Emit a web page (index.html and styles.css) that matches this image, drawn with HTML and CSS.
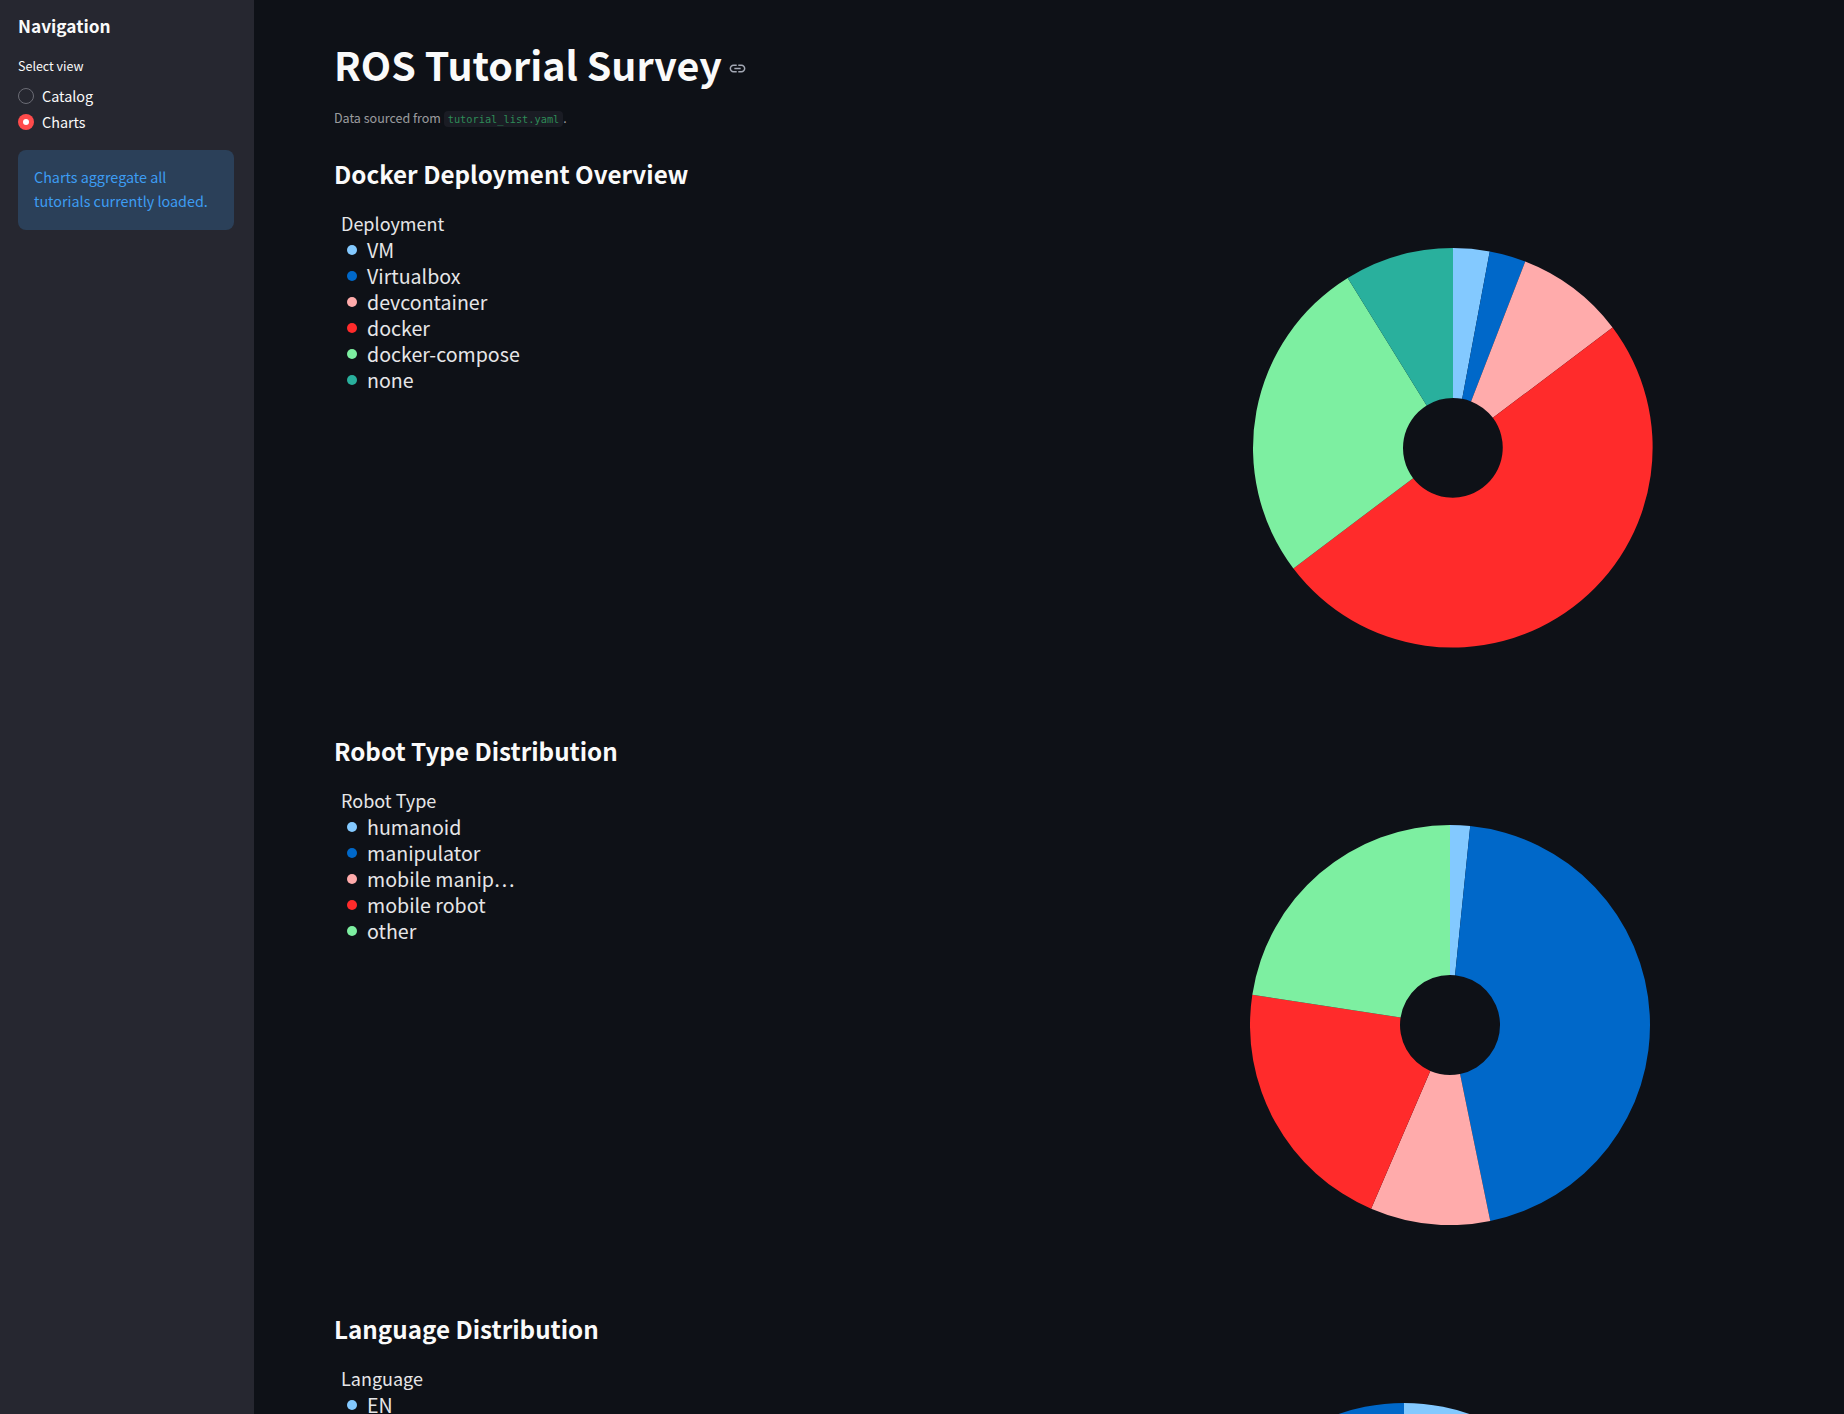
FILE: index.html
```html
<!DOCTYPE html>
<html lang="en">
<head>
<meta charset="utf-8">
<title>ROS Tutorial Survey</title>
<link rel="stylesheet" href="styles.css">
</head>
<body>
<div class="app">
  <aside class="sidebar">
    <h2 class="nav-title">Navigation</h2>
    <div class="radio-label">Select view</div>
    <div class="radio-group">
      <div class="radio"><span class="dot"></span><span>Catalog</span></div>
      <div class="radio"><span class="dot dot-on"></span><span>Charts</span></div>
    </div>
    <div class="info">Charts aggregate all tutorials currently loaded.</div>
  </aside>
  <main class="main">
    <h1 class="title">ROS Tutorial Survey
      <svg class="anchor" viewBox="0 0 24 24" width="19" height="19" aria-hidden="true"><path d="M3.9 12c0-1.71 1.39-3.1 3.1-3.1h4V7H7c-2.76 0-5 2.24-5 5s2.24 5 5 5h4v-1.9H7c-1.71 0-3.1-1.39-3.1-3.1zM8 13h8v-2H8v2zm9-6h-4v1.9h4c1.71 0 3.1 1.39 3.1 3.1s-1.39 3.1-3.1 3.1h-4V17h4c2.76 0 5-2.24 5-5s-2.24-5-5-5z"/></svg>
    </h1>
    <p class="caption">Data sourced from <code>tutorial_list.yaml</code>.</p>

    <section class="section">
      <h3 class="heading">Docker Deployment Overview</h3>
      <div class="chart">
        <div class="legend">
          <div class="legend-title">Deployment</div>
          <div class="legend-row"><span class="sw c1"></span>VM</div>
          <div class="legend-row"><span class="sw c2"></span>Virtualbox</div>
          <div class="legend-row"><span class="sw c3"></span>devcontainer</div>
          <div class="legend-row"><span class="sw c4"></span>docker</div>
          <div class="legend-row"><span class="sw c5"></span>docker-compose</div>
          <div class="legend-row"><span class="sw c6"></span>none</div>
        </div>
        <svg class="pie pie-a" viewBox="-200 -200 400 400" width="400" height="400" role="img" aria-label="Deployment pie chart">
          <path class="f1" d="M0 -200A200 200 0 0 1 36.75 -196.59L9.19 -49.15A50 50 0 0 0 0 -50Z"/>
          <path class="f2" d="M36.75 -196.59A200 200 0 0 1 72.25 -186.49L18.06 -46.62A50 50 0 0 0 9.19 -49.15Z"/>
          <path class="f3" d="M72.25 -186.49A200 200 0 0 1 159.6 -120.53L39.9 -30.13A50 50 0 0 0 18.06 -46.62Z"/>
          <path class="f4" d="M159.6 -120.53A200 200 0 0 1 -159.6 120.53L-39.9 30.13A50 50 0 0 0 39.9 -30.13Z"/>
          <path class="f5" d="M-159.6 120.53A200 200 0 0 1 -105.29 -170.04L-26.32 -42.51A50 50 0 0 0 -39.9 30.13Z"/>
          <path class="f6" d="M-105.29 -170.04A200 200 0 0 1 0 -200L0 -50A50 50 0 0 0 -26.32 -42.51Z"/>
        </svg>
      </div>
    </section>

    <section class="section">
      <h3 class="heading">Robot Type Distribution</h3>
      <div class="chart">
        <div class="legend">
          <div class="legend-title">Robot Type</div>
          <div class="legend-row"><span class="sw c1"></span>humanoid</div>
          <div class="legend-row"><span class="sw c2"></span>manipulator</div>
          <div class="legend-row"><span class="sw c3"></span>mobile manip…</div>
          <div class="legend-row"><span class="sw c4"></span>mobile robot</div>
          <div class="legend-row"><span class="sw c5"></span>other</div>
        </div>
        <svg class="pie pie-b" viewBox="-200 -200 400 400" width="400" height="400" role="img" aria-label="Robot type pie chart">
          <path class="f1" d="M0 -200A200 200 0 0 1 20.23 -198.97L5.06 -49.74A50 50 0 0 0 0 -50Z"/>
          <path class="f2" d="M20.23 -198.97A200 200 0 0 1 40.26 195.91L10.07 48.98A50 50 0 0 0 5.06 -49.74Z"/>
          <path class="f3" d="M40.26 195.91A200 200 0 0 1 -78.87 183.79L-19.72 45.95A50 50 0 0 0 10.07 48.98Z"/>
          <path class="f4" d="M-78.87 183.79A200 200 0 0 1 -197.69 -30.29L-49.42 -7.57A50 50 0 0 0 -19.72 45.95Z"/>
          <path class="f5" d="M-197.69 -30.29A200 200 0 0 1 0 -200L0 -50A50 50 0 0 0 -49.42 -7.57Z"/>
        </svg>
      </div>
    </section>

    <section class="section">
      <h3 class="heading">Language Distribution</h3>
      <div class="chart">
        <div class="legend">
          <div class="legend-title">Language</div>
          <div class="legend-row"><span class="sw c1"></span>EN</div>
        </div>
        <svg class="pie pie-c" viewBox="-200 -200 400 400" width="400" height="400" role="img" aria-label="Language pie chart">
          <path class="f1" d="M0 -200A200 200 0 0 1 0 200L0 50A50 50 0 0 0 0 -50Z"/>
          <path class="f2" d="M0 200A200 200 0 0 1 0 -200L0 -50A50 50 0 0 0 0 50Z"/>
        </svg>
      </div>
    </section>
  </main>
</div>
</body>
</html>
```

FILE: styles.css
```css
* { box-sizing: border-box; }
html, body { margin: 0; height: 100%; overflow: hidden; background: #0e1117; }
body {
  font-family: "Noto Sans CJK SC", "Noto Sans", sans-serif;
  color: #fafafa;
}
.app { display: flex; height: 1414px; overflow: hidden; }

.sidebar {
  width: 254px;
  flex: none;
  background: #262730;
  padding: 13px 20px 12px 18px;
}
.nav-title { margin: 0; font-size: 17.3px; line-height: 26px; font-weight: 600; }
.radio-label { margin-top: 16px; font-size: 12.5px; line-height: 22px; }
.radio-group { margin-top: 7px; display: flex; flex-direction: column; gap: 2px; }
.radio { display: flex; align-items: center; gap: 8px; font-size: 14.4px; line-height: 24px; height: 24px; }
.dot { width: 16px; height: 16px; border-radius: 50%; border: 1px solid #6b6c75; background: #262730; flex: none; }
.dot-on { background: #ff4b4b; border: 0; position: relative; }
.dot-on::after {
  content: "";
  position: absolute;
  left: 5px; top: 5px;
  width: 6px; height: 6px;
  border-radius: 50%;
  background: #fff;
}
.info {
  margin-top: 16px;
  height: 80px;
  padding: 15px 16px;
  border-radius: 8px;
  background: #2b4059;
  color: #3d9df3;
  font-size: 14.35px;
  line-height: 24px;
}

.main { flex: 1; min-width: 0; padding: 39px 0 0 80px; }
.title { margin: 0; font-size: 39.4px; line-height: 50px; font-weight: 700; display: flex; align-items: center; gap: 6px; }
.anchor { fill: #a3a8b4; flex: none; margin-top: 9px; }
.caption { margin: 18px 0 0; font-size: 12.5px; line-height: 22px; color: rgba(250, 250, 250, 0.6); }
.caption code {
  font-family: "DejaVu Sans Mono", "Liberation Mono", monospace;
  font-size: 10.3px;
  color: #2e8b57;
  background: #1a1c24;
  padding: 2px 4px;
  border-radius: 4px;
}
.section { height: 577px; }
.section + .section { height: 578px; }
.section:first-of-type { margin-top: 26px; }
.heading { margin: 0; font-size: 24.2px; line-height: 36px; font-weight: 600; }
.chart { display: flex; align-items: flex-start; margin-top: 18px; }
.legend { width: 260px; flex: none; padding-left: 7px; color: #e6e6e8; }
.legend-title { font-size: 18px; line-height: 27px; }
.legend-row { display: flex; align-items: center; gap: 10px; font-size: 19.6px; line-height: 26px; height: 26px; padding-left: 6px; }
.sw { width: 10px; height: 10px; border-radius: 50%; flex: none; }
.c1 { background: #83c9ff; }
.c2 { background: #0068c9; }
.c3 { background: #ffabab; }
.c4 { background: #ff2b2b; }
.c5 { background: #7defa1; }
.c6 { background: #29b09d; }
.f1 { fill: #83c9ff; }
.f2 { fill: #0068c9; }
.f3 { fill: #ffabab; }
.f4 { fill: #ff2b2b; }
.f5 { fill: #7defa1; }
.f6 { fill: #29b09d; }
.pie { flex: none; margin-top: 38px; }
.pie-a { margin-left: 659px; }
.pie-b { margin-left: 656px; }
.pie-c { margin-left: 610px; }
```
